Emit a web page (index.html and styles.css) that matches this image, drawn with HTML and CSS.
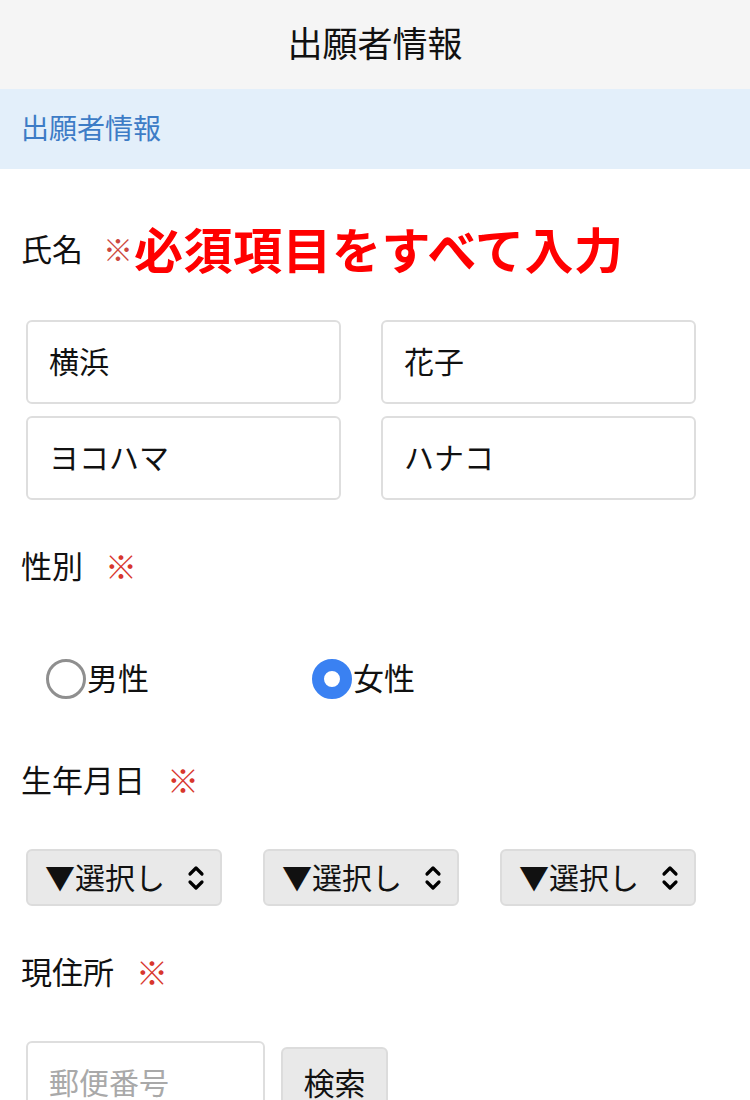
FILE: index.html
```html
<!DOCTYPE html>
<html lang="ja">
<head>
<meta charset="utf-8">
<title>出願者情報</title>
<link rel="stylesheet" href="styles.css">
</head>
<body>
<header class="topbar">出願者情報</header>
<div class="section-head">出願者情報</div>
<main class="form">
  <div class="label-row name-row">
    <span class="label">氏名</span>
    <span class="req req-light">※</span><span class="must">必須項目をすべて入力</span>
  </div>
  <div class="name-grid">
    <div class="box">横浜</div>
    <div class="box">花子</div>
    <div class="box">ヨコハマ</div>
    <div class="box">ハナコ</div>
  </div>

  <div class="label-row gender-label">
    <span class="label">性別</span><span class="req">※</span>
  </div>
  <div class="radio-row">
    <div class="radio-item first"><span class="radio"></span><span class="radio-text">男性</span></div>
    <div class="radio-item"><span class="radio checked"></span><span class="radio-text">女性</span></div>
  </div>

  <div class="label-row birth-label">
    <span class="label">生年月日</span><span class="req">※</span>
  </div>
  <div class="select-row">
    <div class="select"><span class="sel-text">▼選択し</span><svg class="chev" viewBox="0 0 20 28" width="20" height="28"><path d="M4 10 L10 4 L16 10 M4 18 L10 24 L16 18" fill="none" stroke="#000" stroke-width="3.2" stroke-linecap="round" stroke-linejoin="round"/></svg></div>
    <div class="select"><span class="sel-text">▼選択し</span><svg class="chev" viewBox="0 0 20 28" width="20" height="28"><path d="M4 10 L10 4 L16 10 M4 18 L10 24 L16 18" fill="none" stroke="#000" stroke-width="3.2" stroke-linecap="round" stroke-linejoin="round"/></svg></div>
    <div class="select"><span class="sel-text">▼選択し</span><svg class="chev" viewBox="0 0 20 28" width="20" height="28"><path d="M4 10 L10 4 L16 10 M4 18 L10 24 L16 18" fill="none" stroke="#000" stroke-width="3.2" stroke-linecap="round" stroke-linejoin="round"/></svg></div>
  </div>

  <div class="label-row addr-label">
    <span class="label">現住所</span><span class="req">※</span>
  </div>
  <div class="zip-row">
    <div class="box zip"><span class="placeholder">郵便番号</span></div>
    <div class="btn">検索</div>
  </div>
</main>
</body>
</html>
```

FILE: styles.css
```css
html, body {
  margin: 0;
  padding: 0;
  background: #fff;
}
body {
  font-family: "Noto Sans CJK JP", "Noto Sans", sans-serif;
  color: #111;
  overflow: hidden;
  height: 1100px;
}
.topbar {
  box-sizing: border-box;
  height: 89px;
  padding-bottom: 6px;
  background: #f5f5f5;
  display: flex;
  align-items: center;
  justify-content: center;
  font-size: 35px;
  color: #111;
}
.section-head {
  box-sizing: border-box;
  height: 80px;
  padding-bottom: 4px;
  background: #e3effa;
  display: flex;
  align-items: center;
  padding-left: 21px;
  font-size: 28px;
  color: #3d7cc6;
}
.form {
  padding: 0 21px;
}
.label-row {
  box-sizing: border-box;
  display: flex;
  align-items: center;
  height: 44px;
  padding-bottom: 5px;
}
.label {
  font-size: 31px;
  line-height: 40px;
}
.req {
  color: #d8362c;
  font-size: 32px;
  line-height: 40px;
  margin-left: 22px;
}
.req-light {
  color: #cc4840;
  font-size: 30px;
  margin-left: 20px;
}
.name-row {
  margin-top: 50px;
  height: 62px;
}
.must {
  color: #ff0000;
  font-weight: 700;
  font-size: 49px;
  line-height: 58px;
  letter-spacing: 0.5px;
  margin-left: 1px;
}
.name-grid {
  margin-top: 39px;
  padding-left: 5px;
  display: grid;
  grid-template-columns: 315px 315px;
  column-gap: 40px;
  row-gap: 12px;
}
.box {
  box-sizing: border-box;
  height: 84px;
  border: 2px solid #dedede;
  border-radius: 6px;
  background: #fff;
  display: flex;
  align-items: center;
  padding-left: 21px;
  padding-bottom: 4px;
  font-size: 30px;
}
.gender-label {
  margin-top: 45px;
}
.radio-row {
  margin-top: 68px;
  padding-left: 25px;
  display: flex;
  align-items: center;
  height: 44px;
}
.radio-item {
  display: flex;
  align-items: center;
}
.radio-item.first {
  width: 266px;
}
.radio {
  box-sizing: border-box;
  width: 40px;
  height: 40px;
  border-radius: 50%;
  border: 3px solid #8f8f8f;
  background: #fff;
  margin-right: 1px;
}
.radio.checked {
  border: 12px solid #3a81f2;
  background: #fff;
}
.radio-text {
  font-size: 31px;
  line-height: 40px;
  padding-bottom: 5px;
}
.birth-label {
  margin-top: 58px;
}
.select-row {
  margin-top: 46px;
  padding-left: 5px;
  display: grid;
  grid-template-columns: 196px 196px 196px;
  column-gap: 41px;
}
.select {
  box-sizing: border-box;
  height: 57px;
  background: #e9e9e9;
  border: 2px solid #dcdcdc;
  border-radius: 6px;
  display: flex;
  align-items: center;
  justify-content: space-between;
  padding: 0 14px 0 17px;
}
.sel-text {
  font-size: 30px;
  line-height: 1;
  padding-bottom: 4px;
}
.chev {
  display: block;
}
.addr-label {
  margin-top: 45px;
}
.zip-row {
  margin-top: 46px;
  padding-left: 5px;
  display: flex;
  align-items: flex-start;
  gap: 16px;
}
.zip {
  width: 239px;
}
.placeholder {
  color: #a9a9a9;
}
.btn {
  box-sizing: border-box;
  margin-top: 6px;
  width: 107px;
  height: 72px;
  padding-bottom: 4px;
  background: #e9e9e9;
  border: 2px solid #dcdcdc;
  border-radius: 6px;
  display: flex;
  align-items: center;
  justify-content: center;
  font-size: 31px;
}
```
